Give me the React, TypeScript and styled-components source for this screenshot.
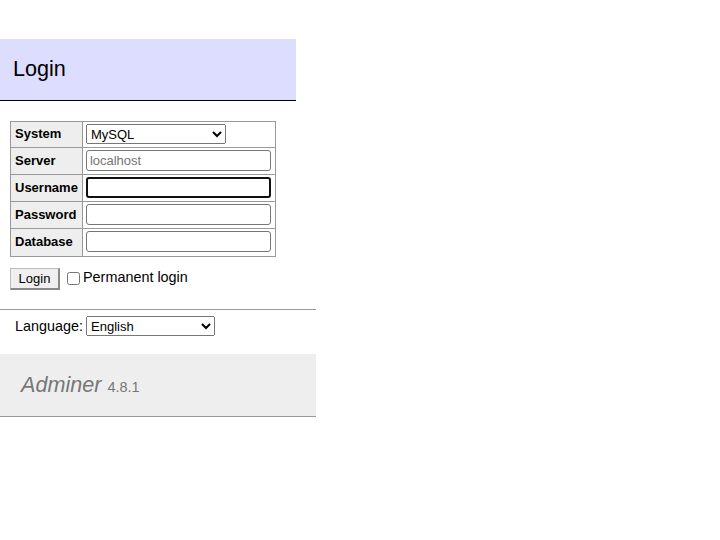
import styled, { createGlobalStyle } from "styled-components";

const GlobalStyle = createGlobalStyle`
  body {
    margin: 0;
    background: #fff;
    color: #000;
    font: 14.4px/1.25 "Liberation Sans", Arial, sans-serif;
  }
`;

const Page = styled.div`
  padding-top: 39px;
`;

const Content = styled.div`
  width: 296px;
`;

const Title = styled.h2`
  margin: 0 0 20px;
  padding: 16px 13px 18px;
  font-size: 21.6px;
  line-height: 27px;
  font-weight: normal;
  background: #ddf;
  border-bottom: 1px solid #000;
`;

const Form = styled.form`
  margin: 0 0 0 10px;
`;

const Table = styled.table`
  border-collapse: collapse;
  border: 1px solid #999;
  font-size: 13px;
`;

const Th = styled.th`
  border: 1px solid #999;
  background: #eee;
  padding: 2px 4px 3px 4px;
  text-align: left;
  font-weight: bold;
  line-height: 16px;
  white-space: nowrap;
`;

const Td = styled.td<{ $last?: boolean }>`
  border: 1px solid #999;
  padding: 2px 4px ${(p) => (p.$last ? 4 : 3)}px 3px;
  vertical-align: middle;
`;

const Select = styled.select<{ $width: number }>`
  display: block;
  box-sizing: border-box;
  width: ${(p) => p.$width}px;
  height: 20px;
  margin: 0;
  font: 13px "Liberation Sans", Arial, sans-serif;
  color: #000;
`;

const Input = styled.input<{ $focused?: boolean }>`
  display: block;
  box-sizing: border-box;
  width: 185px;
  height: 21px;
  margin: 0;
  padding: 1px 3px;
  font: 13px "Liberation Sans", Arial, sans-serif;
  border: ${(p) => (p.$focused ? "2px solid #101010" : "1px solid #767676")};
  border-radius: 3px;
  background: #fff;
  outline: none;
  &::placeholder {
    color: #757575;
  }
`;

const Actions = styled.p`
  display: flex;
  align-items: center;
  margin: 11px 0 0;
`;

const Button = styled.button`
  box-sizing: border-box;
  height: 22px;
  width: 50px;
  padding: 0;
  font: 13px "Liberation Sans", Arial, sans-serif;
  color: #000;
  background: #efefef;
  border: 1px solid #bbb;
  border-right: 2px solid #888;
  border-bottom: 2px solid #888;
`;

const CheckLabel = styled.label`
  display: flex;
  align-items: center;
  margin-left: 7px;
  margin-top: -4px;
`;

const Checkbox = styled.input`
  width: 13px;
  height: 13px;
  margin: 2px 3px 0 0;
`;

const Menu = styled.div`
  width: 316px;
  margin-top: 19px;
  border-top: 1px solid #999;
  border-bottom: 1px solid #999;
`;

const LangRow = styled.p`
  display: flex;
  align-items: center;
  margin: 6px 0 18px 15px;
  gap: 3px;
`;

const Footer = styled.h1`
  margin: 0;
  padding: 17px 21px 18px;
  font-size: 21.6px;
  line-height: 27px;
  font-weight: normal;
  background: #eee;
  color: #777;
`;

const Brand = styled.a`
  color: #777;
  font-style: italic;
  text-decoration: none;
`;

const Version = styled.span`
  font-size: 14.5px;
  line-height: 1;
  color: #777;
`;

const fields = [
  { label: "Server", placeholder: "localhost", type: "text" },
  { label: "Username", placeholder: "", type: "text", focused: true },
  { label: "Password", placeholder: "", type: "password" },
  { label: "Database", placeholder: "", type: "text" },
];

export default function App() {
  return (
    <Page>
      <GlobalStyle />
      <Content>
        <Title>Login</Title>
        <Form onSubmit={(e) => e.preventDefault()}>
          <Table>
            <tbody>
              <tr>
                <Th>System</Th>
                <Td>
                  <Select $width={140} defaultValue="server">
                    <option value="server">MySQL</option>
                    <option value="sqlite">SQLite 3</option>
                    <option value="pgsql">PostgreSQL</option>
                    <option value="oracle">Oracle (beta)</option>
                    <option value="mssql">MS SQL (beta)</option>
                  </Select>
                </Td>
              </tr>
              {fields.map((f, i) => (
                <tr key={f.label}>
                  <Th>{f.label}</Th>
                  <Td $last={i === fields.length - 1}>
                    <Input type={f.type} placeholder={f.placeholder} $focused={f.focused} />
                  </Td>
                </tr>
              ))}
            </tbody>
          </Table>
          <Actions>
            <Button type="submit">Login</Button>
            <CheckLabel>
              <Checkbox type="checkbox" />
              Permanent login
            </CheckLabel>
          </Actions>
        </Form>
      </Content>
      <Menu>
        <LangRow>
          Language:
          <Select $width={129} defaultValue="en">
            <option value="en">English</option>
            <option value="de">Deutsch</option>
            <option value="fr">Français</option>
          </Select>
        </LangRow>
        <Footer>
          <Brand href="#">Adminer</Brand> <Version>4.8.1</Version>
        </Footer>
      </Menu>
    </Page>
  );
}
